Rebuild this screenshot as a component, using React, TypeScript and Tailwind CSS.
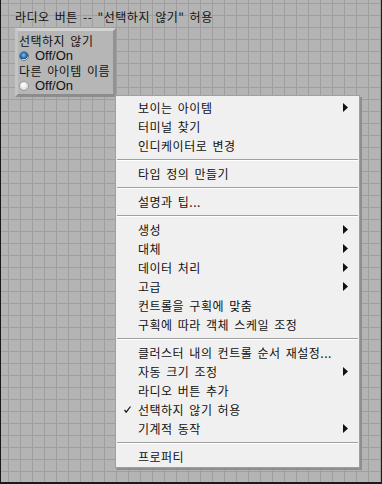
const font = { fontFamily: '"Noto Sans CJK KR", "Liberation Sans", sans-serif' };

type Entry = { label: string; sub?: boolean; checked?: boolean } | 'sep';

const menu: Entry[] = [
  { label: '보이는 아이템', sub: true },
  { label: '터미널 찾기' },
  { label: '인디케이터로 변경' },
  'sep',
  { label: '타입 정의 만들기' },
  'sep',
  { label: '설명과 팁...' },
  'sep',
  { label: '생성', sub: true },
  { label: '대체', sub: true },
  { label: '데이터 처리', sub: true },
  { label: '고급', sub: true },
  { label: '컨트롤을 구획에 맞춤' },
  { label: '구획에 따라 객체 스케일 조정' },
  'sep',
  { label: '클러스터 내의 컨트롤 순서 재설정...' },
  { label: '자동 크기 조정', sub: true },
  { label: '라디오 버튼 추가' },
  { label: '선택하지 않기 허용', checked: true },
  { label: '기계적 동작', sub: true },
  'sep',
  { label: '프로퍼티' },
];

function Radio({ on }: { on?: boolean }) {
  return (
    <span
      className={
        on
          ? 'h-[10px] w-[10px] shrink-0 rounded-full border border-[#6f7d8a] bg-[radial-gradient(circle_at_45%_40%,#7cc4f5_0%,#2a78bd_40%,#174a7a_62%,#dcdcdc_66%)]'
          : 'h-[10px] w-[10px] shrink-0 rounded-full border border-[#9a9a9a] bg-[radial-gradient(circle_at_40%_35%,#ffffff_0%,#e4e4e4_55%,#c4c4c4_100%)]'
      }
    />
  );
}

export default function App() {
  return (
    <div
      className="relative h-[484px] w-[382px] overflow-hidden border-x border-b-2 border-[#1a1a1a] bg-[#b4b4b4] bg-[linear-gradient(to_right,#9e9e9e_1px,transparent_1px),linear-gradient(to_bottom,#9e9e9e_1px,transparent_1px)] [background-position:7px_3px] [background-size:12px_12px] text-[12px] tracking-[0.5px] text-[#111] [word-spacing:2px]"
      style={font}
    >
      <div className="pl-[14px] pt-[9px] leading-[15px]">라디오 버튼 -- "선택하지 않기" 허용</div>

      <div className="ml-[14px] mt-[4px] flex h-[69px] w-[101px] flex-col border-[3px] border-b-[#8c8c8c] border-l-[#c4c4c4] border-r-[#929292] border-t-[#d2d2d2] bg-[#b6b6b6] pl-[1px] pt-[2px] leading-[15px]">
        <div className="h-[15px]">선택하지 않기</div>
        <div className="flex h-[15px] items-center gap-[6px]">
          <Radio on />
          <span className="text-[13px] tracking-normal" style={{ fontFamily: '"Liberation Sans", sans-serif' }}>
            Off/On
          </span>
        </div>
        <div className="h-[15px] whitespace-nowrap">다른 아이템 이름</div>
        <div className="flex h-[15px] items-center gap-[6px]">
          <Radio />
          <span className="text-[13px] tracking-normal" style={{ fontFamily: '"Liberation Sans", sans-serif' }}>
            Off/On
          </span>
        </div>
      </div>

      {/* context menu */}
      <div className="absolute left-[114px] top-[95px] w-[245px] border border-[#a0a0a0] bg-[#f0f0f0] pb-[1px] pt-[2px] shadow-[2px_2px_0_#8e8e8e]">
        {menu.map((m, i) =>
          m === 'sep' ? (
            <div key={i} className="flex h-[9px] items-center px-[1px]">
              <div className="h-[2px] w-full border-t border-[#a0a0a0] border-b-white" style={{ borderBottomWidth: 1 }} />
            </div>
          ) : (
            <div key={i} className="relative flex h-[19px] items-center whitespace-nowrap pl-[22px] leading-[19px]">
              {m.checked && (
                <svg className="absolute left-[8px] top-[6px]" width="7" height="7" viewBox="0 0 7 7">
                  <path d="M0.5 3.8 L2.2 6.2 L6.5 0.5" fill="none" stroke="#111" strokeWidth="1.2" />
                </svg>
              )}
              <span>{m.label}</span>
              {m.sub && (
                <svg className="absolute right-[11px] top-[5px]" width="5" height="9" viewBox="0 0 5 9">
                  <polygon points="0,0 5,4.5 0,9" fill="#111" />
                </svg>
              )}
            </div>
          ),
        )}
      </div>
    </div>
  );
}
